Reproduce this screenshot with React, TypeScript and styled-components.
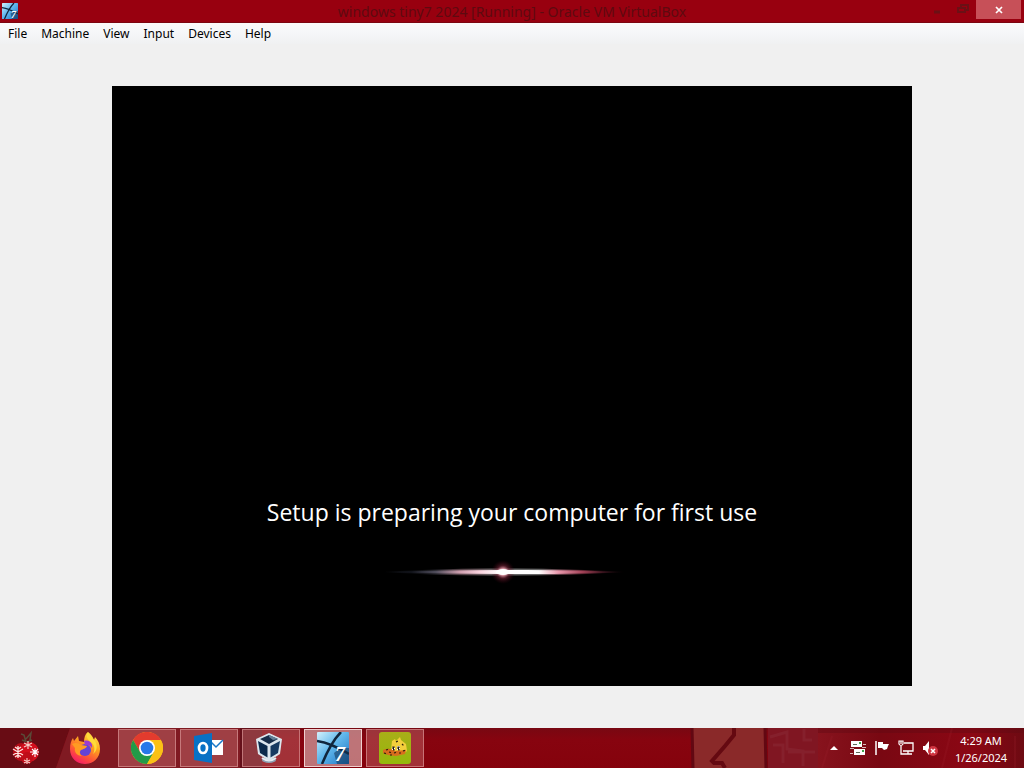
import React from "react";
import styled, { createGlobalStyle } from "styled-components";

const GlobalStyle = createGlobalStyle`
  * { box-sizing: border-box; }
  body {
    margin: 0;
    background: #f0f0f0;
    font-family: "Noto Sans", "Open Sans", sans-serif;
    font-size: 12px;
    color: #000;
  }
  button { font: inherit; color: inherit; border: 0; padding: 0; margin: 0; background: none; }
  svg { display: block; }
`;

const Desktop = styled.div`
  display: flex;
  flex-direction: column;
  min-height: 100vh;
`;

const TitleBar = styled.header`
  display: grid;
  grid-template-columns: 128px 1fr 128px;
  height: 23px;
  background: #98000f;
  border-bottom: 1px solid #7c0510;
`;

const TitleIcon = styled.div`
  padding: 3px 2px;
`;

const Title = styled.h1`
  margin: 0;
  font-size: 14px;
  font-weight: 400;
  line-height: 24px;
  text-align: center;
  white-space: nowrap;
  color: #5e0a10;
`;

const WindowControls = styled.div`
  display: flex;
  justify-content: flex-end;
  padding-right: 3px;
`;

const WindowButton = styled.button<{ $close?: boolean }>`
  display: flex;
  align-items: center;
  justify-content: center;
  width: ${(p) => (p.$close ? 45 : 26)}px;
  height: 19px;
  background: ${(p) => (p.$close ? "#c75058" : "transparent")};
`;

const MenuBar = styled.nav`
  display: flex;
  height: 21px;
  padding-left: 1px;
  background: linear-gradient(#fbf9f9, #f6f7f9 40%, #f0f1f2);
`;

const MenuItem = styled.button`
  padding: 0 7px;
  line-height: 20px;
  height: 21px;
`;

const Workspace = styled.main`
  flex: 1;
  display: flex;
  align-items: center;
  justify-content: center;
  background: #f0f0f0;
`;

const GuestScreen = styled.section`
  display: flex;
  flex-direction: column;
  align-items: center;
  justify-content: flex-end;
  gap: 12px;
  width: 100%;
  max-width: 800px;
  aspect-ratio: 4 / 3;
  padding-bottom: 82px;
  background: #000;
`;

const SetupMessage = styled.p`
  margin: 0;
  font-family: "Open Sans", "Noto Sans", sans-serif;
  font-size: 23px;
  line-height: 32px;
  color: #fff;
  white-space: nowrap;
`;

const Taskbar = styled.footer`
  position: relative;
  display: flex;
  height: 40px;
  background: #86040f;
  overflow: hidden;
`;

const Wallpaper = styled.svg`
  position: absolute;
  inset: 0;
  width: 100%;
  height: 100%;
`;

const Apps = styled.div`
  position: relative;
  flex: 1;
  display: flex;
  gap: 4px;
  padding-top: 1px;
`;

type AppState = "pinned" | "open" | "active";

const fills: Record<AppState, string> = {
  pinned: "transparent",
  open: "rgba(205, 120, 120, 0.4)",
  active: "rgba(225, 185, 185, 0.62)",
};

const edges: Record<AppState, string> = {
  pinned: "transparent",
  open: "rgba(225, 160, 160, 0.6)",
  active: "#f0cfcf",
};

const AppButton = styled.button<{ $state: AppState }>`
  display: flex;
  align-items: center;
  justify-content: center;
  width: 58px;
  height: 38px;
  border: 1px solid ${(p) => edges[p.$state]};
  background: ${(p) => fills[p.$state]};
`;

const StartButton = styled.button`
  display: flex;
  align-items: center;
  justify-content: center;
  width: 52px;
  height: 38px;
`;

const Tray = styled.div`
  position: relative;
  display: flex;
  align-items: center;
  padding-right: 16px;
`;

const TrayButton = styled.button`
  display: flex;
  align-items: center;
  justify-content: center;
  width: 24px;
  height: 40px;
`;

const Clock = styled.button`
  display: flex;
  flex-direction: column;
  align-items: center;
  width: 54px;
  margin-left: 12px;
  padding-top: 2px;
  font-size: 11px;
  line-height: 17px;
  white-space: nowrap;
  color: #fff;
`;

const Windows7Icon = ({ size, id }: { size: number; id: string }) => (
  <svg width={size} height={size} viewBox="0 0 32 32">
    <defs>
      <linearGradient id={id} x1="0" y1="0" x2="1" y2="1">
        <stop offset="0" stopColor="#d2f1fc" />
        <stop offset=".45" stopColor="#62b8ec" />
        <stop offset="1" stopColor="#1c74c4" />
      </linearGradient>
    </defs>
    <rect width="32" height="32" rx="1" fill={`url(#${id})`} />
    <path d="M0 9Q14 11 32 22M24 0Q14 10 5 32" fill="none" stroke="#10263d" strokeWidth="2.500" />
    <path d="M17 21l6-5h9v16H20z" fill="#133253" opacity=".55" />
    <text x="18" y="29" fontFamily="Liberation Serif, serif" fontSize="20" fontWeight="700" fontStyle="italic" fill="#fff">7</text>
  </svg>
);

const Ornament = () => (
  <svg width="30" height="36" viewBox="0 0 30 36">
    <path d="M15 12L13 5l-3-1M15 9l5-6-1 7M11 10l5 2 5-2" fill="none" stroke="#5a4a38" strokeWidth="1.500" />
    <ellipse cx="10" cy="22" rx="8" ry="9" fill="#b50c18" />
    <circle cx="18" cy="22" r="10" fill="#d30f1d" />
    <circle cx="16" cy="28" r="6" fill="#bf0d19" />
    <path d="M7 16v12M2 19l10 6M12 19L2 25M4 17l3 2 3-2M4 27l3-2 3 2" fill="none" stroke="#ffe5e0" strokeWidth="1.300" />
    <path d="M17 11v8M13 13l8 4M21 13l-8 4" stroke="#f7cdc6" strokeWidth="1.200" />
    <path d="M24 18v9M19 22h9M21 19l6 6M27 19l-6 6" stroke="#fff" strokeWidth="1.100" />
    <path d="M16 28v6M13 30l6 3M19 30l-6 3" stroke="#f7cdc6" strokeWidth="1.100" />
  </svg>
);

const Firefox = () => (
  <svg width="32" height="32" viewBox="0 0 32 32">
    <defs>
      <linearGradient id="fox" x1=".8" y1="0" x2=".25" y2="1">
        <stop offset="0" stopColor="#fff04a" />
        <stop offset=".38" stopColor="#ffa21e" />
        <stop offset=".7" stopColor="#ff5536" />
        <stop offset="1" stopColor="#f5156c" />
      </linearGradient>
    </defs>
    <path d="M19 0c3 2 5 5 6 8l1-3c3 3 5 7 5 12 0 9-7 15-15 15S1 26 1 17c0-5 1-8 3-11l1 3 4-5 1 5 5 1c0-4 1-8 4-10z" fill="url(#fox)" />
    <circle cx="16" cy="18" r="6" fill="#6543d5" />
    <path d="M15 9c6-2 9 3 8 7-2-3-4-3-7-3z" fill="#9b3bd0" />
    <path d="M3 12c3-2 7-1 9 1l6 1c-1 3-4 3-6 4-2 2-1 5 1 6-5 0-8-4-7-8z" fill="#ff9b22" />
    <path d="M19 0c-3 5 0 8 4 11 3 3 3 8 1 11 4-3 5-8 2-13-2-3-6-5-7-9z" fill="#ffdb3a" />
  </svg>
);

const Chrome = () => (
  <svg width="32" height="32" viewBox="0 0 32 32">
    <circle cx="16" cy="16" r="16" fill="#fbc116" />
    <path d="M2.100 8A16 16 0 0 1 29.900 8H16L9 20z" fill="#e33b2e" />
    <path d="M2.100 8A16 16 0 0 0 16 32L22.900 20 9.100 20z" fill="#229a48" />
    <path d="M16 8h13.900A16 16 0 0 1 16 32l6.900-12z" fill="#fbc116" />
    <circle cx="16" cy="16" r="8" fill="#fff" />
    <circle cx="16" cy="16" r="6.300" fill="#2878e8" />
  </svg>
);

const Outlook = () => (
  <svg width="30" height="32" viewBox="0 0 30 32">
    <path d="M16 8h13v15H16z" fill="#fff" />
    <path d="M16 9l6 6 7-7" fill="none" stroke="#1878c8" strokeWidth="1.500" />
    <path d="M0 4L18 1v30L0 28z" fill="#0871c5" />
    <ellipse cx="9" cy="16" rx="4" ry="5" fill="none" stroke="#fff" strokeWidth="2.700" />
  </svg>
);

const VirtualBox = () => (
  <svg width="32" height="32" viewBox="0 0 32 32">
    <ellipse cx="14" cy="28" rx="7" ry="3" fill="#8da0b2" />
    <path d="M7 26q7 5 14 0" fill="none" stroke="#e6edf3" strokeWidth="2" />
    <path d="M14 1L27 7 25 22 14 29 3 22 1 7z" fill="#dce6ed" />
    <path d="M14 3L23 7 14 12 5 7z" fill="#172d49" />
    <path d="M3 9L12.500 14v11.500L5 21z" fill="#0c2a4b" />
    <path d="M25 9L15.500 14v11.500L23 21z" fill="#173a61" />
    <path d="M14 3L23 7 18 8 14 5z" fill="#637e95" />
  </svg>
);

const GreenApp = () => (
  <svg width="32" height="32" viewBox="0 0 32 32">
    <defs>
      <linearGradient id="lime" x1="0" y1="0" x2="0" y2="1">
        <stop offset="0" stopColor="#a9ae18" />
        <stop offset="1" stopColor="#94b90c" />
      </linearGradient>
    </defs>
    <rect width="32" height="32" rx="3" fill="url(#lime)" />
    <path d="M12 18l1-9 3-2 1 2 4-4 1 3 5 4 1 7-4 3-8 1z" fill="#f3cf3c" />
    <path d="M4 18q6-3 12 1l11-1-1 4-9 2-8-1-5-2z" fill="#d96d1e" />
    <path d="M13 15h3v3h-3zM18 14h3v4h-3z" fill="#fff" />
    <path d="M14 15h1v3h-1zM19 15h1v3h-1zM7 18l3-1M5 21l3 1M10 20l3 1M15 21l3-1M20 21l3 0M24 19l3-1M17 10l2-1M23 12l2 2M11 23l3 0" stroke="#2d210b" strokeWidth="1.200" strokeDasharray="2 1" />
  </svg>
);

const GlowBar = () => (
  <svg width="300" height="64" viewBox="0 0 300 64">
    <defs>
      <linearGradient id="streak">
        <stop offset="0" stopColor="#222631" stopOpacity="0" />
        <stop offset=".12" stopColor="#14161e" />
        <stop offset=".22" stopColor="#4f4d5b" />
        <stop offset=".32" stopColor="#d0a0b0" />
        <stop offset=".4" stopColor="#fbd4e0" />
        <stop offset=".48" stopColor="#fff" />
        <stop offset=".64" stopColor="#fff" />
        <stop offset=".72" stopColor="#e897ab" />
        <stop offset=".82" stopColor="#a04055" />
        <stop offset=".9" stopColor="#3a141e" />
        <stop offset="1" stopColor="#100408" stopOpacity="0" />
      </linearGradient>
      <radialGradient id="flare">
        <stop offset="0" stopColor="#fff" />
        <stop offset=".25" stopColor="#e9a4b0" />
        <stop offset=".55" stopColor="#792539" stopOpacity=".55" />
        <stop offset="1" stopColor="#400010" stopOpacity="0" />
      </radialGradient>
    </defs>
    <path d="M20 32Q80 28 141 28.500Q200 28 265 32Q200 36 141 35.500Q80 36 20 32z" fill="url(#streak)" opacity=".4" />
    <circle cx="141" cy="32" r="12" fill="url(#flare)" />
    <path d="M20 32Q80 30 141 30Q210 29.500 265 32Q210 34.500 141 34Q80 34 20 32z" fill="url(#streak)" />
    <ellipse cx="141" cy="32" rx="7" ry="3" fill="#fff" />
  </svg>
);

const TaskbarArt = () => (
  <Wallpaper viewBox="0 0 1024 40" preserveAspectRatio="xMaxYMid slice" aria-hidden="true">
    <defs>
      <linearGradient id="shade" x1="0" y1="0" x2="0" y2="1">
        <stop offset="0" stopColor="#780812" />
        <stop offset=".3" stopColor="#87040f" />
        <stop offset="1" stopColor="#85020c" />
      </linearGradient>
      <linearGradient id="trayShade">
        <stop offset="0" stopColor="#87131d" />
        <stop offset=".3" stopColor="#790812" />
        <stop offset=".75" stopColor="#8c0714" />
        <stop offset="1" stopColor="#6d0a12" />
      </linearGradient>
    </defs>
    <rect width="1024" height="40" fill="url(#shade)" />
    <path d="M0 0H70L56 40H0z" fill="#680c14" />
    <path d="M70 0H260V40H56z" fill="#801a22" />
    <path d="M240 0h22v40h-22z" fill="#65101a" />
    <path d="M691 0h74l2 40h-74z" fill="#8a2929" />
    <path d="M692 0l1 40M765 0l1 40" stroke="#620812" strokeWidth="3" />
    <path d="M734 0v7L725 18 712 33l2 2h8l3 5" fill="none" stroke="#650911" strokeWidth="4" />
    <path d="M768 0h52v40h-52z" fill="#801622" />
    <path d="M770 9l17-5v17l16 2v15M788 24h27M804 1v11h8M773 17h10v18" fill="none" stroke="#923846" strokeWidth="3" opacity=".3" />
    <path d="M818 0h206v40H818z" fill="url(#trayShade)" />
    <path d="M818 0h206v5H818z" fill="#600b14" opacity=".4" />
    <path d="M832 8L822 40M952 0l-10 40M1015 8v32" stroke="#a12430" strokeWidth="2" opacity=".2" />
  </Wallpaper>
);

const menus = ["File", "Machine", "View", "Input", "Devices", "Help"];

const apps: { name: string; state: AppState; icon: React.ReactNode }[] = [
  { name: "Firefox", state: "pinned", icon: <Firefox /> },
  { name: "Chrome", state: "open", icon: <Chrome /> },
  { name: "Outlook", state: "open", icon: <Outlook /> },
  { name: "VirtualBox", state: "open", icon: <VirtualBox /> },
  { name: "Windows 7 machine", state: "active", icon: <Windows7Icon size={32} id="glassTask" /> },
  { name: "Game", state: "open", icon: <GreenApp /> },
];

export default function App() {
  return (
    <Desktop>
      <GlobalStyle />
      <TitleBar>
        <TitleIcon><Windows7Icon size={16} id="glassTitle" /></TitleIcon>
        <Title>windows tiny7 2024 [Running] - Oracle VM VirtualBox</Title>
        <WindowControls>
          <WindowButton aria-label="Minimize">
            <svg width="10" height="10" viewBox="0 0 10 10"><path d="M2 7h6" stroke="#6b1015" strokeWidth="3" /></svg>
          </WindowButton>
          <WindowButton aria-label="Restore">
            <svg width="12" height="12" viewBox="0 0 12 12"><path d="M4 4V1h7v5H8M1 4h7v4H1z" fill="none" stroke="#6b1015" strokeWidth="2" /></svg>
          </WindowButton>
          <WindowButton $close aria-label="Close">
            <svg width="8" height="8" viewBox="0 0 8 8"><path d="M1 1l6 6M7 1L1 7" stroke="#fff" strokeWidth="1.700" /></svg>
          </WindowButton>
        </WindowControls>
      </TitleBar>
      <MenuBar>
        {menus.map((m) => <MenuItem key={m}>{m}</MenuItem>)}
      </MenuBar>
      <Workspace>
        <GuestScreen>
          <SetupMessage>Setup is preparing your computer for first use</SetupMessage>
          <GlowBar />
        </GuestScreen>
      </Workspace>
      <Taskbar>
        <TaskbarArt />
        <Apps>
          <StartButton aria-label="Start"><Ornament /></StartButton>
          {apps.map((a) => (
            <AppButton key={a.name} $state={a.state} aria-label={a.name}>{a.icon}</AppButton>
          ))}
        </Apps>
        <Tray>
          <TrayButton aria-label="Show hidden icons">
            <svg width="8" height="4" viewBox="0 0 8 4"><path d="M0 4L4 0l4 4z" fill="#fff" /></svg>
          </TrayButton>
          <TrayButton aria-label="Mail servers">
            <svg width="16" height="16" viewBox="0 0 16 16">
              <path d="M1 1h11v6H1zM4 9h11v6H4z" fill="#fff" />
              <path d="M3 4.500h4M6 12.500h4" stroke="#5d6d5c" />
              <path d="M9 3h2M12 11h2" stroke="#3ea34a" strokeWidth="2" />
              <path d="M0 8.500h4M12 7.500h4M0 13.500h3M13 4.500h3" stroke="#d9b8b8" />
            </svg>
          </TrayButton>
          <TrayButton aria-label="Action Center">
            <svg width="16" height="16" viewBox="0 0 16 16">
              <path d="M2 1v14" stroke="#fff" strokeWidth="1.500" />
              <path d="M4 2h5v2h6l-1 2-1 3-3 1-2-2H4z" fill="#fff" />
            </svg>
          </TrayButton>
          <TrayButton aria-label="Network">
            <svg width="16" height="16" viewBox="0 0 16 16">
              <path d="M6 3h9v8H5M10 11v3M6 14h8M3 6v8h3" fill="none" stroke="#fff" strokeWidth="1.300" />
              <path d="M1 1h4v3q-2 3-4 0zM3 1v3" fill="none" stroke="#fff" strokeWidth="1.200" />
            </svg>
          </TrayButton>
          <TrayButton aria-label="Volume muted">
            <svg width="16" height="16" viewBox="0 0 16 16">
              <path d="M1 6h2l4-5v14l-4-5H1z" fill="#fff" />
              <circle cx="11" cy="11" r="5" fill="#cf3541" />
              <path d="M9 9l4 4M13 9l-4 4" stroke="#fff" strokeWidth="1.500" />
            </svg>
          </TrayButton>
          <Clock aria-label="Date and time">
            <span>4:29 AM</span>
            <span>1/26/2024</span>
          </Clock>
        </Tray>
      </Taskbar>
    </Desktop>
  );
}
